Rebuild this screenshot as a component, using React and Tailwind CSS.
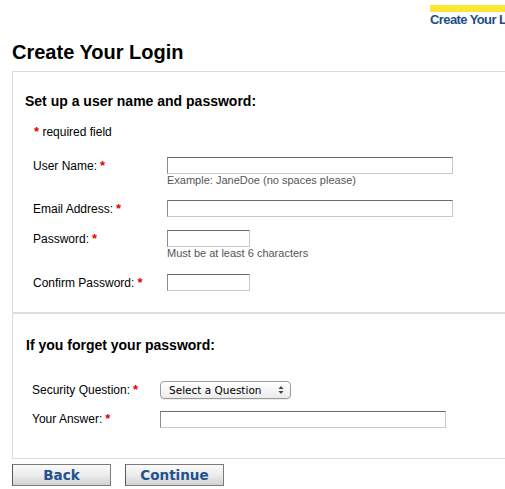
export default function App() {
  const Star = () => (
    <span className="text-[#e00000] font-bold text-[13px] ml-[3px]">*</span>
  );
  const inputCls =
    "block h-[17px] bg-white border border-t-[#6a6a6a] border-l-[#8a8a8a] border-r-[#c8c8c8] border-b-[#c8c8c8]";
  const labelCls = "text-[12px] leading-[14px] pt-[2px] whitespace-nowrap";
  const hintCls = "text-[11px] leading-[13px] text-[#555555] whitespace-nowrap";
  const btnCls =
    "w-[99px] h-[22px] flex items-center justify-center border border-[#7b7b7b] border-l-[#5a5a5a] bg-gradient-to-b from-[#fafafa] via-[#ececec] to-[#d2d2d2] text-[#22518f] font-bold text-[13.5px] font-['DejaVu_Sans',Verdana,sans-serif]";

  return (
    <div className="w-[505px] h-[489px] overflow-hidden bg-white text-black font-['Liberation_Sans',Arial,Helvetica,sans-serif]">
      <div className="pt-[5px] pl-[430px] whitespace-nowrap">
        <div className="h-[7px] w-[200px] bg-[#fbe634]"></div>
        <div className="text-[13px] leading-[14px] font-bold text-[#1d4d8a] tracking-[-0.6px] pt-[1px]">
          Create Your Login
        </div>
      </div>

      <h1 className="mt-[13px] ml-[12px] text-[20px] leading-[24px] font-bold whitespace-nowrap">
        Create Your Login
      </h1>

      <div className="mt-[7px] ml-[12px] w-[560px] border border-[#dcdcdc]">
        <div className="pt-[21px] pl-[12px] pb-[21px]">
          <div className="text-[14px] leading-[17px] font-bold whitespace-nowrap">
            Set up a user name and password:
          </div>
          <div className="mt-[15px] ml-[9px] text-[12px] leading-[14px] whitespace-nowrap">
            <span className="text-[#e00000] font-bold text-[13px]">*</span> required field
          </div>

          <div className="mt-[18px] ml-[8px] flex flex-col">
            <div className="flex items-start">
              <div className={"w-[134px] " + labelCls}>
                User Name:<Star />
              </div>
              <div>
                <div className={inputCls + " w-[286px]"}></div>
                <div className={hintCls}>Example: JaneDoe (no spaces please)</div>
              </div>
            </div>
            <div className="flex items-start mt-[13px]">
              <div className={"w-[134px] " + labelCls}>
                Email Address:<Star />
              </div>
              <div className={inputCls + " w-[286px]"}></div>
            </div>
            <div className="flex items-start mt-[13px]">
              <div className={"w-[134px] " + labelCls}>
                Password:<Star />
              </div>
              <div>
                <div className={inputCls + " w-[83px]"}></div>
                <div className={hintCls}>Must be at least 6 characters</div>
              </div>
            </div>
            <div className="flex items-start mt-[14px]">
              <div className={"w-[134px] " + labelCls}>
                Confirm Password:<Star />
              </div>
              <div className={inputCls + " w-[83px]"}></div>
            </div>
          </div>
        </div>

        <div className="border-t-2 border-[#dddddd] pt-[23px] pl-[13px] pb-[30px]">
          <div className="text-[14px] leading-[17px] font-bold whitespace-nowrap">
            If you forget your password:
          </div>
          <div className="mt-[27px] ml-[6px] flex flex-col">
            <div className="flex items-start">
              <div className="w-[128px] text-[12px] leading-[14px] pt-[2px] whitespace-nowrap">
                Security Question:<Star />
              </div>
              <div className="w-[131px] h-[18px] rounded-[4px] border border-[#9a9a9a] bg-gradient-to-b from-white to-[#ececec] flex items-center pl-[8px] pr-[6px] justify-between shadow-[0_1px_1px_rgba(0,0,0,0.08)]">
                <span className="text-[10.5px] leading-[12px] font-['DejaVu_Sans',Verdana,sans-serif] whitespace-nowrap">
                  Select a Question
                </span>
                <svg width="6" height="10" viewBox="0 0 6 10">
                  <path d="M3 1 L5.5 4 H0.5 Z" fill="#444" />
                  <path d="M3 9 L5.5 6 H0.5 Z" fill="#444" />
                </svg>
              </div>
            </div>
            <div className="flex items-start mt-[12px]">
              <div className="w-[128px] text-[12px] leading-[14px] pt-[1px] whitespace-nowrap">
                Your Answer:<Star />
              </div>
              <div className={inputCls + " w-[286px]"}></div>
            </div>
          </div>
        </div>
      </div>

      <div className="mt-[5px] ml-[12px] flex gap-[14px]">
        <div className={btnCls}>Back</div>
        <div className={btnCls}>Continue</div>
      </div>
    </div>
  );
}
